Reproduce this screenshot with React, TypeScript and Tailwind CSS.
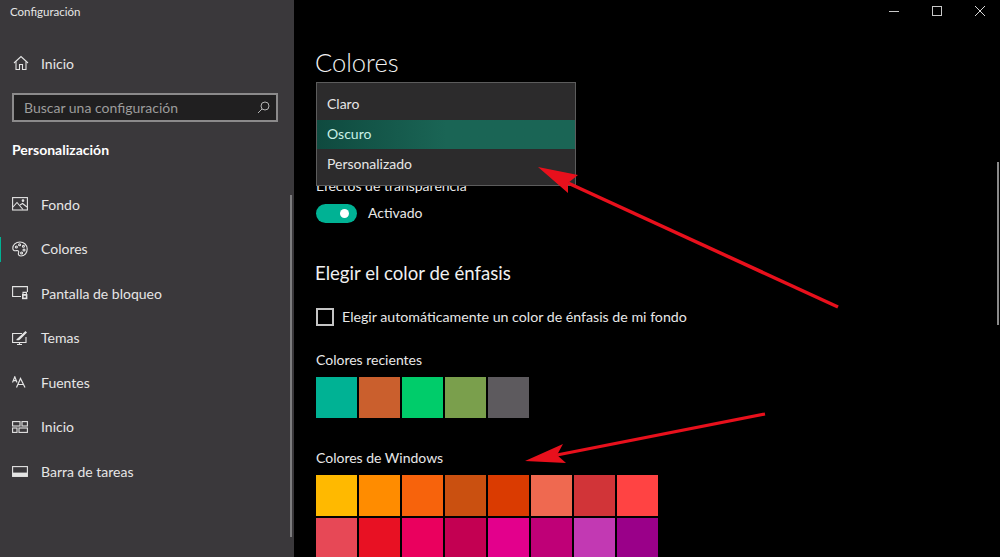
const font = { fontFamily: 'Lato, "Open Sans", sans-serif' };

const HomeIcon = () => (
  <svg width="16" height="16" viewBox="0 0 16 16" fill="none" stroke="#e4e4e4" strokeWidth="1.1">
    <path d="M1 8 L8 1.5 L15 8" />
    <path d="M3 6.5 V14.5 H6.5 V9.5 H9.5 V14.5 H13 V6.5" />
  </svg>
);

const ImageIcon = () => (
  <svg width="16" height="14" viewBox="0 0 16 14" fill="none" stroke="#e4e4e4" strokeWidth="1.1">
    <rect x="0.6" y="0.6" width="14.8" height="12.4" />
    <path d="M1 10 L5 5.5 L11 12.5" />
    <path d="M8 8 L10.5 6.5 L15 10" />
    <circle cx="11" cy="3.6" r="0.8" fill="#e4e4e4" />
  </svg>
);

const PaletteIcon = () => (
  <svg width="16" height="16" viewBox="0 0 16 16" fill="none" stroke="#e4e4e4" strokeWidth="1.1">
    <path d="M8 1 C3.5 1 0.8 4 0.8 7.2 C0.8 9.5 2.6 10 4.5 9.6 C6.5 9.3 7 10.5 6.5 12 C6 13.8 7 15 9 15 C12.8 15 15.2 11.5 15.2 8 C15.2 4 12 1 8 1 Z" />
    <circle cx="4.4" cy="6" r="1" />
    <circle cx="7.6" cy="3.8" r="1" />
    <circle cx="11.4" cy="5.2" r="1" />
    <circle cx="12" cy="9" r="1" />
    <circle cx="9.6" cy="12" r="1" />
  </svg>
);

const LockIcon = () => (
  <svg width="16" height="14" viewBox="0 0 16 14" fill="none" stroke="#e4e4e4" strokeWidth="1.1">
    <path d="M9 10.5 H0.6 V0.6 H15.4 V6" />
    <rect x="10" y="8" width="5.4" height="5.2" fill="#e4e4e4" stroke="none" />
    <path d="M11 8 V6.4 H14.4 V8" />
    <rect x="11.6" y="9.8" width="2.2" height="1.8" fill="#3a383b" stroke="none" />
  </svg>
);

const ThemeIcon = () => (
  <svg width="16" height="16" viewBox="0 0 16 16" fill="none" stroke="#e4e4e4" strokeWidth="1.1">
    <path d="M10 3.5 H0.6 V12.5 H14 V7" />
    <path d="M5 14.5 H10 M7.5 12.5 V14.5" />
    <path d="M4 10 C5 9.5 5 8.5 6 8 L13.5 1 L15 2.5 L8 9.5 C7 10.5 5.5 10.5 4 10 Z" fill="#e4e4e4" stroke="none" />
  </svg>
);

const FontIcon = () => (
  <svg width="14" height="12" viewBox="0 0 14 12" fill="none" stroke="#e4e4e4" strokeWidth="1.2">
    <path d="M0.5 6.5 L2.8 0.8 L5 6.5 M1.4 4.6 H4.2" />
    <path d="M4.5 11.5 L8.5 2.5 L13 11.5 M6 8.5 H11.4" />
  </svg>
);

const StartIcon = () => (
  <svg width="16" height="12" viewBox="0 0 16 12" fill="none" stroke="#e4e4e4" strokeWidth="1.1">
    <rect x="0.6" y="0.6" width="7.4" height="4.4" />
    <rect x="10" y="0.6" width="5.4" height="4.4" />
    <rect x="0.6" y="7" width="4.4" height="4.4" />
    <rect x="7" y="7" width="8.4" height="4.4" />
  </svg>
);

const TaskbarIcon = () => (
  <svg width="16" height="11" viewBox="0 0 16 11" fill="none">
    <rect x="0.6" y="0.6" width="14.8" height="9.8" stroke="#e4e4e4" strokeWidth="1.1" />
    <rect x="0.6" y="6.6" width="14.8" height="3.8" fill="#e4e4e4" />
  </svg>
);

const navItems = [
  { label: 'Fondo', icon: <ImageIcon /> },
  { label: 'Colores', icon: <PaletteIcon />, active: true },
  { label: 'Pantalla de bloqueo', icon: <LockIcon /> },
  { label: 'Temas', icon: <ThemeIcon /> },
  { label: 'Fuentes', icon: <FontIcon /> },
  { label: 'Inicio', icon: <StartIcon /> },
  { label: 'Barra de tareas', icon: <TaskbarIcon /> },
];

const recentColors = ['#00b294', '#ca5f2d', '#00cc6a', '#7a9f4c', '#5d5a5e'];

const windowsColors = [
  '#ffb900', '#ff8c00', '#f7630c', '#ca5010', '#da3b01', '#ef6950', '#d13438', '#ff4343',
  '#e74856', '#e81123', '#ea005e', '#c30052', '#e3008c', '#bf0077', '#c239b3', '#9a0089',
];

function Sidebar() {
  return (
    <aside className="relative flex w-[294px] shrink-0 flex-col bg-[#3a383b] text-[#e6e6e6]">
      <div className="flex h-[24px] items-center pl-[10px] text-[11.5px]">Configuración</div>
      <div className="mt-[17px] flex h-[44px] items-center pl-[13px] text-[14px]">
        <span className="flex w-[28px]"><HomeIcon /></span>
        Inicio
      </div>
      <div className="mx-[12px] mt-[8px] flex h-[29px] w-[266px] items-center justify-between border-2 border-[#8b8a8b] bg-[#201f20] pl-[10px] pr-[6px] text-[14px] text-[#9c9c9c]">
        Buscar una configuración
        <svg width="13" height="13" viewBox="0 0 13 13" fill="none" stroke="#b4b4b4" strokeWidth="1">
          <circle cx="8" cy="5" r="4" />
          <path d="M5 8 L1 12" />
        </svg>
      </div>
      <div className="mt-[16px] pl-[12px] text-[14px] leading-[24px] font-bold text-white">Personalización</div>
      <nav className="mt-[20px] flex flex-col">
        {navItems.map((item) => (
          <div key={item.label} className="relative flex h-[44.5px] items-center pl-[12px] text-[14px]">
            {item.active && <span className="absolute top-[10px] left-0 h-[25px] w-[1px] bg-[#00b294]" />}
            <span className="flex w-[29px] items-center">{item.icon}</span>
            {item.label}
          </div>
        ))}
      </nav>
      <span className="absolute top-[195px] right-[2px] h-[342px] w-[2px] bg-[#7d7c7e]" />
    </aside>
  );
}

function Swatches({ colors }: { colors: string[] }) {
  return (
    <div className="grid w-[342px] grid-cols-[repeat(8,41px)] auto-rows-[41px] gap-[2px]">
      {colors.map((color, i) => (
        <div key={i} style={{ backgroundColor: color }} />
      ))}
    </div>
  );
}

function Dropdown() {
  return (
    <div className="absolute top-[82px] left-[22px] flex h-[104px] w-[260px] flex-col border border-[#5c5c5c] bg-[#2c2b2c] pt-[7px] text-[14px] text-[#e6e6e6]">
      <div className="flex h-[30px] items-center pb-[3px] pl-[10px]">Claro</div>
      <div className="flex h-[29px] items-center bg-gradient-to-r from-[#0f4a3f] via-[#1a6555] via-50% to-[#1a6555] pb-[2px] pl-[10px] text-[#c8f0e6]">
        Oscuro
      </div>
      <div className="flex h-[30px] items-center pb-[2px] pl-[10px]">Personalizado</div>
    </div>
  );
}

function WindowControls() {
  return (
    <div className="absolute top-0 right-0 flex h-[22px] items-center gap-[33px] pr-[15px]">
      <span className="h-px w-[10px] bg-[#c8c8c8]" />
      <span className="h-[10px] w-[10px] border border-[#c8c8c8]" />
      <svg width="10" height="10" viewBox="0 0 10 10" stroke="#d8d8d8" strokeWidth="1">
        <path d="M0 0 L10 10 M10 0 L0 10" />
      </svg>
    </div>
  );
}

function Arrows() {
  return (
    <svg className="pointer-events-none absolute inset-0" width="1000" height="557" viewBox="0 0 1000 557">
      <path d="M838 307 L568 183" stroke="#e8101c" strokeWidth="3.5" />
      <path d="M538 167 L578 175 L568 183 L568 193 Z" fill="#e8101c" />
      <path d="M765 414 L557 455" stroke="#e8101c" strokeWidth="3.2" />
      <path d="M525 461 L563 444 L557 455 L566 463 Z" fill="#e8101c" />
    </svg>
  );
}

export default function App() {
  return (
    <div className="relative flex h-[557px] w-[1000px] overflow-hidden bg-black" style={font}>
      <Sidebar />
      <main className="relative flex-1 pl-[22px] text-[#e8e8e8]">
        <h1 className="ml-[-1px] pt-[45px] text-[25.5px] leading-[34px] font-light text-[#f2f2f2]">Colores</h1>
        <div className="mt-[97px] text-[14px] leading-[20px]">Efectos de transparencia</div>
        <div className="mt-[7px] flex h-[20px] items-center">
          <span className="flex h-[19px] w-[41px] items-center justify-end rounded-full bg-[#00b294] pr-[8px]">
            <span className="h-[9px] w-[9px] rounded-full bg-white" />
          </span>
          <span className="ml-[11px] pb-px text-[14px]">Activado</span>
        </div>
        <h2 className="mt-[37px] ml-[-1px] text-[18.6px] leading-[26px] font-normal text-[#f0f0f0]">Elegir el color de énfasis</h2>
        <div className="mt-[20px] flex h-[22px] items-center">
          <span className="h-[18px] w-[18px] border-2 border-[#c4c4c4]" />
          <span className="ml-[8px] pb-px text-[14.2px]">Elegir automáticamente un color de énfasis de mi fondo</span>
        </div>
        <div className="mt-[22px] text-[14px] leading-[20px]">Colores recientes</div>
        <div className="mt-[7px]"><Swatches colors={recentColors} /></div>
        <div className="mt-[30px] text-[14px] leading-[20px]">Colores de Windows</div>
        <div className="mt-[7px]"><Swatches colors={windowsColors} /></div>
        <Dropdown />
        <WindowControls />
        <span className="absolute top-[162px] right-px h-[163px] w-[2px] bg-[#8a8a8a]" />
      </main>
      <Arrows />
    </div>
  );
}
